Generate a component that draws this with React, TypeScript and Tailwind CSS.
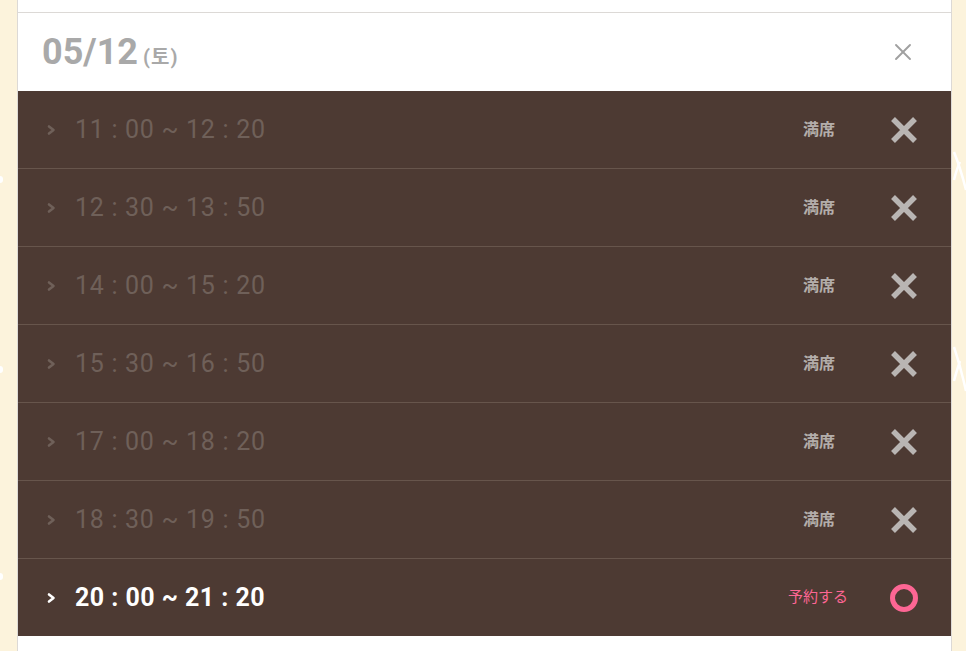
import { X } from "lucide-react";

interface Slot {
  start: string;
  end: string;
  open: boolean;
}

const slots: Slot[] = [
  { start: "11 : 00", end: "12 : 20", open: false },
  { start: "12 : 30", end: "13 : 50", open: false },
  { start: "14 : 00", end: "15 : 20", open: false },
  { start: "15 : 30", end: "16 : 50", open: false },
  { start: "17 : 00", end: "18 : 20", open: false },
  { start: "18 : 30", end: "19 : 50", open: false },
  { start: "20 : 00", end: "21 : 20", open: true },
];

function Chevron({ color }: { color: string }) {
  return (
    <svg width="10" height="12" viewBox="0 0 10 12" fill="none">
      <path d="M3 2.5 L7.5 6 L3 9.5" stroke={color} strokeWidth="2.6" strokeLinecap="round" strokeLinejoin="round" />
    </svg>
  );
}

function FullMark() {
  return (
    <svg width="28" height="28" viewBox="0 0 28 28">
      <path d="M3 3 L25 25 M25 3 L3 25" stroke="#b9b5b3" strokeWidth="5.5" />
    </svg>
  );
}

function OpenMark() {
  return (
    <svg width="30" height="30" viewBox="0 0 30 30">
      <circle cx="16" cy="15" r="11.5" fill="none" stroke="#fd6694" strokeWidth="5" />
    </svg>
  );
}

export default function App() {
  return (
    <div
      className="relative h-[651px] w-full overflow-hidden bg-[#fcf3dc]"
      style={{ fontFamily: "Roboto, 'Noto Sans CJK JP', sans-serif" }}
    >
      {/* background squiggles */}
      <svg className="absolute right-0 top-[150px]" width="14" height="44" viewBox="0 0 14 44" fill="none">
        <path d="M2 2 C6 12 10 24 14 40" stroke="#ffffff" strokeWidth="2.5" />
        <path d="M2 30 C4 22 6 16 8 12" stroke="#ffffff" strokeWidth="2.5" />
      </svg>
      <svg className="absolute right-0 top-[345px]" width="14" height="50" viewBox="0 0 14 50" fill="none">
        <path d="M2 2 C6 14 10 28 14 46" stroke="#ffffff" strokeWidth="2.5" />
        <path d="M2 36 C4 28 6 22 8 16" stroke="#ffffff" strokeWidth="2.5" />
      </svg>
      <span className="absolute left-[-3px] top-[176px] h-[7px] w-[6px] rounded-full bg-white" />
      <span className="absolute left-[-3px] top-[366px] h-[7px] w-[6px] rounded-full bg-white" />
      <span className="absolute left-[-3px] top-[573px] h-[7px] w-[6px] rounded-full bg-white" />

      <div className="ml-[17px] flex h-full w-[935px] flex-col border-x border-[#dcd9d6] bg-white">
        <div className="h-[13px] shrink-0 border-b border-[#dcd9d6]" />

        {/* Header */}
        <div className="flex h-[78px] shrink-0 items-center justify-between pl-[24px] pr-[34px]">
          <div className="flex items-baseline">
            <span className="text-[36px] font-bold leading-none text-[#a9a9a9]">05/12</span>
            <span className="ml-[5px] text-[20px] font-bold leading-none tracking-[1px] text-[#a9a9a9]">(토)</span>
          </div>
          <X size={28} strokeWidth={1.6} className="text-[#a0a0a0]" />
        </div>

        {/* Slots */}
        <div className="shrink-0 bg-[#4d3a33]">
          {slots.map((slot, i) => (
            <div
              key={slot.start}
              className={`flex h-[77px] items-center pl-[28px] pr-[33px] ${i > 0 ? "box-content border-t border-[#67554c]" : ""}`}
            >
              <Chevron color={slot.open ? "#ffffff" : "#6f6059"} />
              {slot.open ? (
                <span className="ml-[19px] text-[25px] font-bold tracking-[0.45px] text-white">
                  {slot.start} ~ {slot.end}
                </span>
              ) : (
                <span className="ml-[19px] text-[25px] tracking-[0.7px] text-[#6f6059]">
                  {slot.start} ~ {slot.end}
                </span>
              )}
              <div className="flex-1" />
              {slot.open ? (
                <>
                  <span className="mr-[40px] text-[15px] text-[#fd6694]">予約する</span>
                  <OpenMark />
                </>
              ) : (
                <>
                  <span className="mr-[55px] text-[16px] font-bold text-[#b3adaa]">満席</span>
                  <FullMark />
                </>
              )}
            </div>
          ))}
        </div>

        <div className="flex-1 bg-white" />
      </div>
    </div>
  );
}
